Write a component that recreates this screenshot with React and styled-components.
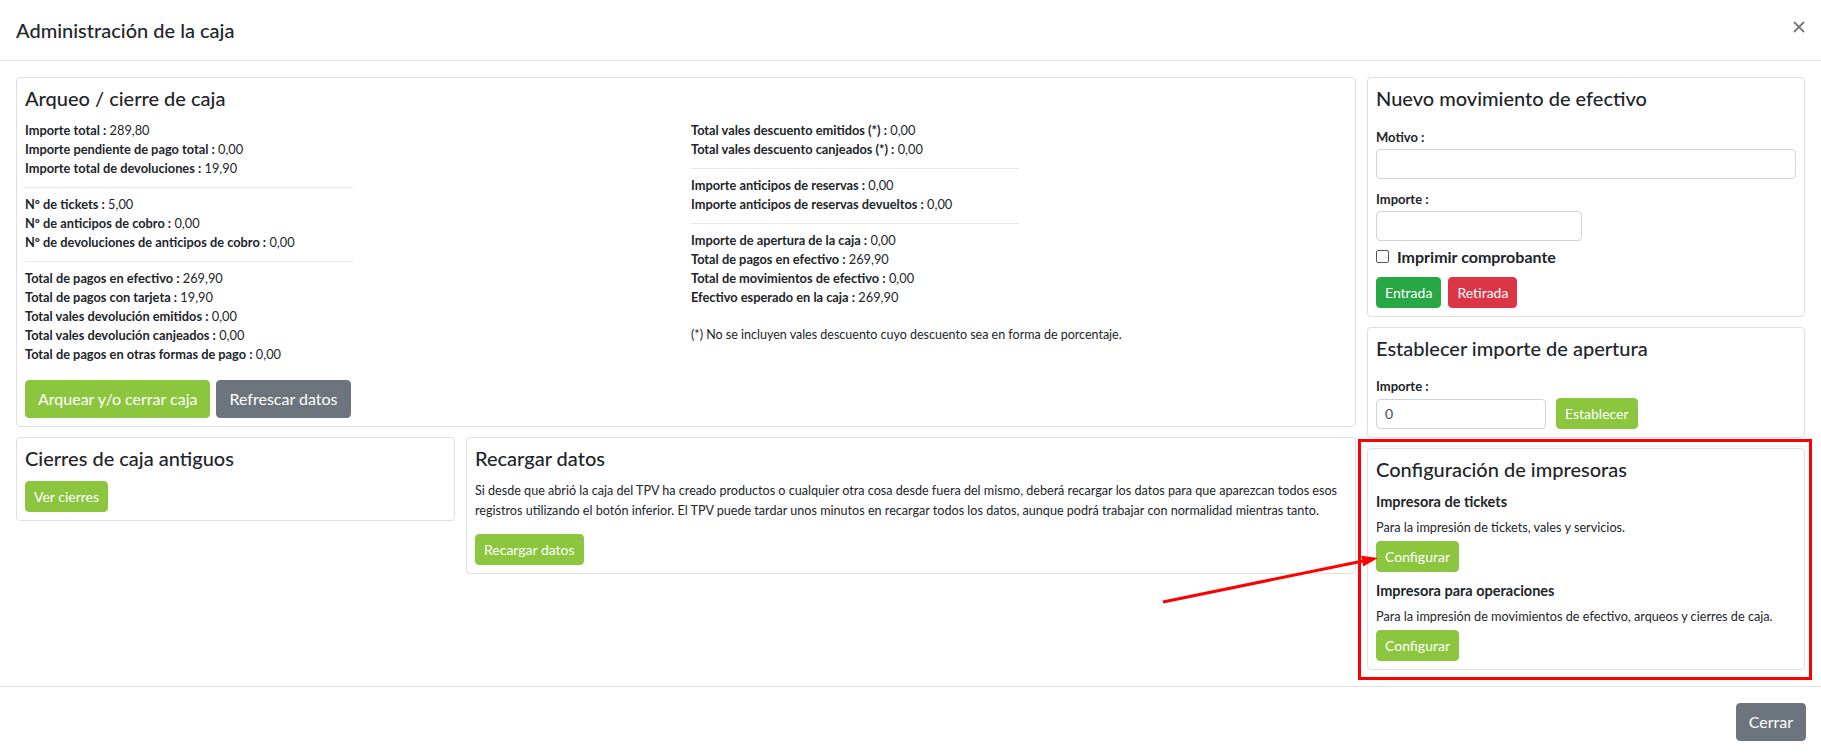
import React from "react";
import styled, { createGlobalStyle, css } from "styled-components";

const GlobalStyle = createGlobalStyle`
  html, body { margin: 0; padding: 0; background: #fff; }
  body {
    font-family: Lato, "Open Sans", "Liberation Sans", sans-serif;
    color: #212529;
    -webkit-font-smoothing: antialiased;
  }
  * { box-sizing: border-box; }
`;

const Modal = styled.div`
  width: 1821px;
  min-height: 756px;
  display: flex;
  flex-direction: column;
  background: #fff;
`;

const Header = styled.div`
  display: flex;
  justify-content: space-between;
  align-items: flex-start;
  padding: 16px 16px;
  border-bottom: 1px solid #e3e3e3;
`;

const ModalTitle = styled.h5`
  margin: 0;
  font-size: 20px;
  line-height: 28px;
  font-weight: 500;
`;

const CloseButton = styled.button`
  border: 0;
  background: transparent;
  padding: 0;
  margin: 5px 0 0 0;
  width: 12px;
  height: 12px;
  display: flex;
  cursor: pointer;
`;

const Body = styled.div`
  position: relative;
  padding: 16px;
  display: grid;
  grid-template-columns: 1fr 438px;
  column-gap: 11px;
  align-items: start;
`;

const Column = styled.div`
  display: flex;
  flex-direction: column;
  gap: 10px;
`;

const BottomRow = styled.div`
  display: grid;
  grid-template-columns: 439px 1fr;
  column-gap: 11px;
  align-items: start;
`;

const Card = styled.div`
  position: relative;
  border: 1px solid #dfdfdf;
  border-radius: 4px;
  padding: 8px;
  background: #fff;
`;

const Highlight = styled.div`
  position: absolute;
  top: -10px;
  left: -10px;
  right: -8px;
  bottom: -11px;
  border: 3px solid #ff0000;
  pointer-events: none;
`;

const CardTitle = styled.h4`
  margin: 0 0 ${(p) => p.$mb ?? 11}px 0;
  font-size: 20px;
  line-height: 24px;
  font-weight: 500;
`;

const StatsGrid = styled.div`
  display: grid;
  grid-template-columns: 1fr 1fr;
  column-gap: 10px;
`;

const StatLine = styled.div`
  font-size: 12.8px;
  line-height: 19px;
  white-space: nowrap;
  strong { font-weight: 700; }
`;

const Divider = styled.hr`
  width: 50%;
  margin: 9px 0 7px 0;
  border: 0;
  border-top: 1px solid #e6e6e6;
`;

const Note = styled.p`
  margin: 18px 0 0 0;
  font-size: 12.5px;
  line-height: 19px;
`;

const ButtonRow = styled.div`
  display: flex;
  gap: ${(p) => p.$gap ?? 6}px;
  margin-top: ${(p) => p.$mt ?? 0}px;
  align-items: center;
`;

const variants = {
  lime: "#8cc63f",
  gray: "#6c757d",
  green: "#28a745",
  red: "#dc3545",
};

const Button = styled.button`
  font-family: inherit;
  color: #fff;
  background: ${(p) => variants[p.$variant || "lime"]};
  border: 1px solid ${(p) => variants[p.$variant || "lime"]};
  border-radius: 4px;
  cursor: pointer;
  white-space: nowrap;
  font-weight: 400;
  ${(p) =>
    p.$size === "sm"
      ? css`
          font-size: 14px;
          line-height: 21px;
          padding: 4px 8px;
        `
      : css`
          font-size: 16px;
          line-height: 24px;
          padding: 6px 12px;
        `}
`;

const Paragraph = styled.p`
  margin: 0 0 13px 0;
  font-size: 12.6px;
  line-height: 20px;
`;

const FormLabel = styled.label`
  display: block;
  font-size: 13px;
  line-height: 19px;
  font-weight: 700;
  margin-bottom: 2px;
`;

const FormGroup = styled.div`
  margin-bottom: ${(p) => p.$mb ?? 0}px;
`;

const Input = styled.input`
  display: block;
  width: ${(p) => p.$width || "100%"};
  height: 30px;
  padding: 0 8px;
  font-family: inherit;
  font-size: 14px;
  color: #495057;
  border: 1px solid #ced4da;
  border-radius: 4px;
  background: #fff;
  outline: none;
`;

const InlineForm = styled.div`
  display: flex;
  align-items: center;
  gap: 10px;
`;

const CheckRow = styled.label`
  display: flex;
  align-items: center;
  gap: 8px;
  height: 22px;
  margin: 4px 0 10px 0;
  font-size: 16px;
  font-weight: 700;
`;

const CheckBox = styled.span`
  width: 13px;
  height: 13px;
  border: 1px solid #555;
  border-radius: 2px;
  background: #fff;
  flex: none;
`;

const SubHeading = styled.h5`
  margin: ${(p) => p.$mt ?? 0}px 0 4px 0;
  font-size: 14.5px;
  line-height: 22px;
  font-weight: 700;
`;

const Description = styled.p`
  margin: 0 0 4px 0;
  font-size: 12.7px;
  line-height: 20px;
`;

const Footer = styled.div`
  display: flex;
  justify-content: flex-end;
  padding: 16px 15px 15px 16px;
  border-top: 1px solid #e3e3e3;
`;

const ArrowOverlay = styled.svg`
  position: absolute;
  left: 1150px;
  top: 479px;
  width: 240px;
  height: 70px;
  overflow: visible;
  pointer-events: none;
`;

const Stat = ({ label, value }) => (
  <StatLine>
    <strong>{label} :</strong> {value}
  </StatLine>
);

export default function App() {
  return (
    <>
      <GlobalStyle />
      <Modal>
        <Header>
          <ModalTitle>Administración de la caja</ModalTitle>
          <CloseButton aria-label="Cerrar">
            <svg width="12" height="12" viewBox="0 0 12 12">
              <path d="M1 1 L11 11 M11 1 L1 11" stroke="#7a7a7a" strokeWidth="1.8" />
            </svg>
          </CloseButton>
        </Header>

        <Body>
          <Column>
            <Card>
              <CardTitle>Arqueo / cierre de caja</CardTitle>
              <StatsGrid>
                <div>
                  <Stat label="Importe total" value="289,80" />
                  <Stat label="Importe pendiente de pago total" value="0,00" />
                  <Stat label="Importe total de devoluciones" value="19,90" />
                  <Divider />
                  <Stat label="Nº de tickets" value="5,00" />
                  <Stat label="Nº de anticipos de cobro" value="0,00" />
                  <Stat label="Nº de devoluciones de anticipos de cobro" value="0,00" />
                  <Divider />
                  <Stat label="Total de pagos en efectivo" value="269,90" />
                  <Stat label="Total de pagos con tarjeta" value="19,90" />
                  <Stat label="Total vales devolución emitidos" value="0,00" />
                  <Stat label="Total vales devolución canjeados" value="0,00" />
                  <Stat label="Total de pagos en otras formas de pago" value="0,00" />
                </div>
                <div>
                  <Stat label="Total vales descuento emitidos (*)" value="0,00" />
                  <Stat label="Total vales descuento canjeados (*)" value="0,00" />
                  <Divider />
                  <Stat label="Importe anticipos de reservas" value="0,00" />
                  <Stat label="Importe anticipos de reservas devueltos" value="0,00" />
                  <Divider />
                  <Stat label="Importe de apertura de la caja" value="0,00" />
                  <Stat label="Total de pagos en efectivo" value="269,90" />
                  <Stat label="Total de movimientos de efectivo" value="0,00" />
                  <Stat label="Efectivo esperado en la caja" value="269,90" />
                  <Note>(*) No se incluyen vales descuento cuyo descuento sea en forma de porcentaje.</Note>
                </div>
              </StatsGrid>
              <ButtonRow $mt={16}>
                <Button $variant="lime">Arquear y/o cerrar caja</Button>
                <Button $variant="gray">Refrescar datos</Button>
              </ButtonRow>
            </Card>

            <BottomRow>
              <Card>
                <CardTitle>Cierres de caja antiguos</CardTitle>
                <Button $size="sm">Ver cierres</Button>
              </Card>
              <Card>
                <CardTitle>Recargar datos</CardTitle>
                <Paragraph>
                  Si desde que abrió la caja del TPV ha creado productos o cualquier otra cosa desde fuera del
                  mismo, deberá recargar los datos para que aparezcan todos esos registros utilizando el botón
                  inferior. El TPV puede tardar unos minutos en recargar todos los datos, aunque podrá trabajar
                  con normalidad mientras tanto.
                </Paragraph>
                <Button $size="sm">Recargar datos</Button>
              </Card>
            </BottomRow>
          </Column>

          <Column>
            <Card>
              <CardTitle $mb={18}>Nuevo movimiento de efectivo</CardTitle>
              <FormGroup $mb={11}>
                <FormLabel>Motivo :</FormLabel>
                <Input type="text" />
              </FormGroup>
              <FormGroup>
                <FormLabel>Importe :</FormLabel>
                <Input type="text" $width="206px" />
              </FormGroup>
              <CheckRow>
                <CheckBox />
                Imprimir comprobante
              </CheckRow>
              <ButtonRow $gap={7}>
                <Button $size="sm" $variant="green">Entrada</Button>
                <Button $size="sm" $variant="red">Retirada</Button>
              </ButtonRow>
            </Card>

            <Card>
              <CardTitle $mb={17}>Establecer importe de apertura</CardTitle>
              <FormLabel>Importe :</FormLabel>
              <InlineForm>
                <Input type="text" defaultValue="0" $width="170px" />
                <Button $size="sm">Establecer</Button>
              </InlineForm>
            </Card>

            <Card>
              <Highlight />
              <CardTitle $mb={10}>Configuración de impresoras</CardTitle>
              <SubHeading>Impresora de tickets</SubHeading>
              <Description>Para la impresión de tickets, vales y servicios.</Description>
              <Button $size="sm">Configurar</Button>
              <SubHeading $mt={8}>Impresora para operaciones</SubHeading>
              <Description>Para la impresión de movimientos de efectivo, arqueos y cierres de caja.</Description>
              <Button $size="sm">Configurar</Button>
            </Card>
          </Column>

          <ArrowOverlay viewBox="0 0 240 70">
            <line x1="13" y1="62" x2="213" y2="21" stroke="#ff0000" strokeWidth="3" />
            <polygon points="228,18 213.3,26.5 211.3,15.8" fill="#ff0000" />
          </ArrowOverlay>
        </Body>

        <Footer>
          <Button $variant="gray">Cerrar</Button>
        </Footer>
      </Modal>
    </>
  );
}
